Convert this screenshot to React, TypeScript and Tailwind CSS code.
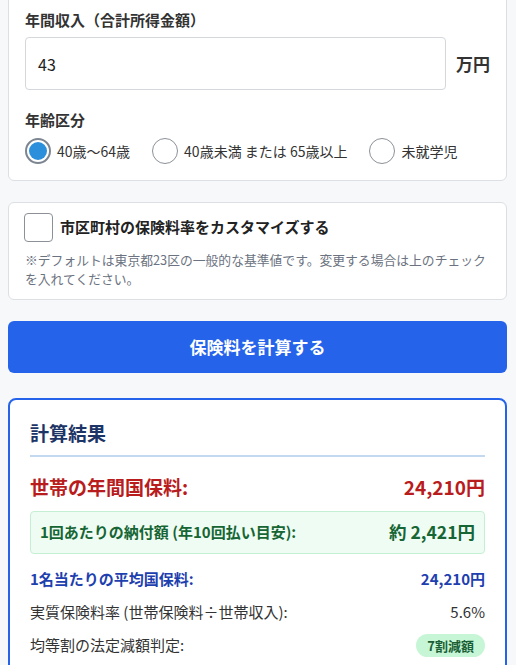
import React from "react";

const font = { fontFamily: '"Noto Sans CJK JP", "Noto Sans", sans-serif' };

function Radio({ checked, label }: { checked?: boolean; label: string }) {
  return (
    <label className="flex items-center">
      {checked ? (
        <span className="w-[26px] h-[26px] rounded-full border-2 border-[#7d8690] bg-white flex items-center justify-center">
          <span className="w-[18px] h-[18px] rounded-full bg-[#2b8fdb]" />
        </span>
      ) : (
        <span className="w-[26px] h-[26px] rounded-full border border-[#8c9198] bg-white" />
      )}
      <span className="ml-[6px] text-[14px] text-[#333]">{label}</span>
    </label>
  );
}

export default function App() {
  return (
    <div className="min-h-[665px] bg-[#f7f8fa] pl-[8px] pr-[9px] overflow-hidden" style={font}>
      {/* card 1 */}
      <div className="mt-[-8px] bg-white border border-[#dcdfe3] rounded-[6px] px-4 pt-4 pb-4">
        <div className="text-[15px] leading-[22.5px] font-bold text-[#333]">年間収入（合計所得金額）</div>
        <div className="mt-[5.5px] flex items-center">
          <div className="w-[421px] h-[53px] border border-[#d4d7dc] rounded-[4px] flex items-center px-3 text-[16px] text-[#222]">
            43
          </div>
          <span className="ml-[10px] text-[17px] font-bold text-[#333]">万円</span>
        </div>
        <div className="mt-[18.5px] text-[15px] leading-[22.5px] font-bold text-[#333]">年齢区分</div>
        <div className="mt-[7px] flex items-center gap-[22px]">
          <Radio checked label="40歳〜64歳" />
          <Radio label="40歳未満 または 65歳以上" />
          <Radio label="未就学児" />
        </div>
      </div>

      {/* card 2 */}
      <div className="mt-[21px] bg-white border border-[#dcdfe3] rounded-[6px] px-4 pt-[10px] pb-[11px]">
        <div className="flex items-center">
          <span className="w-[29px] h-[29px] rounded-[4px] border border-[#8c9198] bg-white ml-[-1px]" />
          <span className="ml-[7px] text-[15px] font-bold text-[#222]">市区町村の保険料率をカスタマイズする</span>
        </div>
        <p className="mt-[8px] text-[12.8px] leading-[19px] text-[#6b7280]">
          ※デフォルトは東京都23区の一般的な基準値です。変更する場合は上のチェックを入れてください。
        </p>
      </div>

      {/* button */}
      <button className="mt-[21px] w-full h-[52px] rounded-[6px] bg-[#2563eb] text-white text-[17px] font-bold flex items-center justify-center">
        保険料を計算する
      </button>

      {/* result */}
      <div className="mt-[25px] bg-white border-2 border-[#2563eb] rounded-[8px] px-5 pt-[19px] pb-4">
        <h2 className="text-[19px] leading-[28px] font-bold text-[#1c3466] pb-[8px] border-b-2 border-[#c3d9ef]">計算結果</h2>
        <div className="mt-[14px] h-[33px] flex items-center justify-between text-[#b91c1c] font-bold">
          <span className="text-[19px]">世帯の年間国保料:</span>
          <span className="text-[19px]">24,210円</span>
        </div>
        <div className="mt-[7px] h-[43px] bg-[#effcf3] border border-[#c5efd3] rounded-[4px] px-[9px] flex items-center justify-between text-[#166534] font-bold">
          <span className="text-[15px]">1回あたりの納付額 (年10回払い目安):</span>
          <span className="text-[17.5px]">約 2,421円</span>
        </div>
        <div className="mt-[9px] h-[33px] flex items-center justify-between text-[#1e40af] font-bold text-[15px]">
          <span>1名当たりの平均国保料:</span>
          <span>24,210円</span>
        </div>
        <div className="h-[33px] flex items-center justify-between text-[#333] text-[15px]">
          <span>実質保険料率 (世帯保険料÷世帯収入):</span>
          <span>5.6%</span>
        </div>
        <div className="h-[33px] flex items-center justify-between text-[#333] text-[15px]">
          <span>均等割の法定減額判定:</span>
          <span className="h-[23px] px-[11px] rounded-full bg-[#c6f6d5] text-[#1a5e35] text-[13px] font-bold flex items-center">7割減額</span>
        </div>
      </div>
    </div>
  );
}
